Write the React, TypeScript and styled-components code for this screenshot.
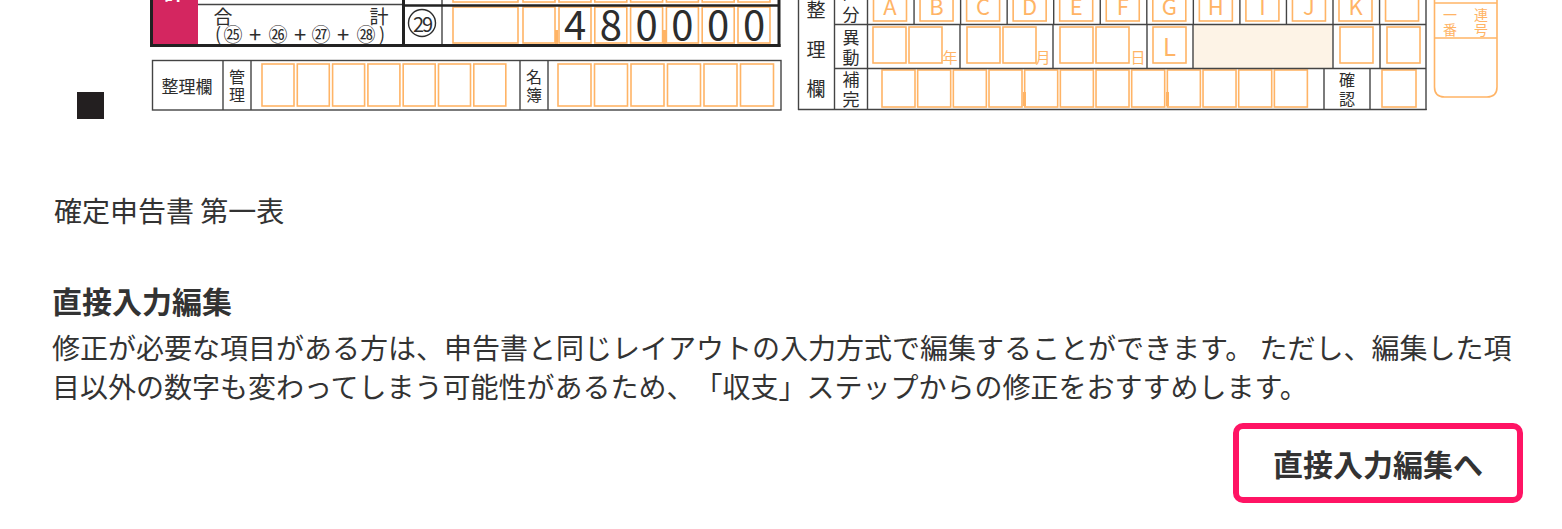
import React from "react";
import styled, { createGlobalStyle } from "styled-components";

const ORANGE = "#ffb466";
const INK = "#2d2d2d";
const LINE = "#444";
const FONT = `"Noto Sans CJK JP", "Noto Sans", sans-serif`;

const GlobalStyle = createGlobalStyle`
	body {
		margin: 0;
		background: #fff;
		color: #333;
		font-family: ${FONT};
	}
`;

const Page = styled.div`
	width: 1562px;
`;

const FormPreview = styled.svg`
	display: block;
	width: 1562px;
	height: 130px;
`;

const OrangeBox = styled.rect`
	fill: none;
	stroke: ${ORANGE};
	stroke-width: 1.6;
`;

const Tick = styled.rect`
	fill: ${ORANGE};
`;

const Rule = styled.line<{ $w?: number; $c?: string }>`
	stroke: ${({ $c }) => $c ?? LINE};
	stroke-width: ${({ $w }) => $w ?? 1.4};
`;

const FormText = styled.text<{ $size: number; $color?: string; $bold?: boolean }>`
	font-family: ${FONT};
	font-size: ${({ $size }) => $size}px;
	font-weight: ${({ $bold }) => ($bold ? 700 : 400)};
	fill: ${({ $color }) => $color ?? INK};
	text-anchor: middle;
	dominant-baseline: central;
`;

const Content = styled.div`
	padding: 0 39px 0 52px;
`;

const FormTitle = styled.p`
	margin: 61px 0 0 2px;
	font-size: 28px;
	line-height: 1.4;
	color: #333;
`;

const SectionHeading = styled.h2`
	margin: 49px 0 0;
	font-size: 30px;
	font-weight: 700;
	line-height: 1.4;
	color: #333;
`;

const Description = styled.p`
	margin: 7px 0 0;
	font-size: 28px;
	line-height: 1.4;
	color: #333;
	text-spacing-trim: space-all;
`;

const Actions = styled.div`
	display: flex;
	justify-content: flex-end;
	margin-top: 16px;
`;

const EditButton = styled.button`
	width: 290px;
	height: 80px;
	border: 6px solid #ff1464;
	border-radius: 10px;
	background: #fff;
	color: #333;
	font-family: ${FONT};
	font-size: 30px;
	font-weight: 700;
	cursor: pointer;
`;

const Box = ({ x, y, w, h }: { x: number; y: number; w: number; h: number }) => (
	<OrangeBox x={x} y={y} width={w} height={h} />
);

const VText = ({ x, y1, y2, a, b, size = 16 }: { x: number; y1: number; y2: number; a: string; b: string; size?: number }) => (
	<>
		<FormText x={x} y={y1} $size={size}>{a}</FormText>
		<FormText x={x} y={y2} $size={size}>{b}</FormText>
	</>
);

const digits = ["4", "8", "0", "0", "0", "0"];
const letters = ["A", "B", "C", "D", "E", "F", "G", "H", "I", "J", "K", ""];

// pieces of "(㉕ + ㉖ + ㉗ + ㉘)" with their centres and sizes
const sumFormula: [string, number, number][] = [
	["(", 218, 18],
	["㉕", 233, 19],
	["+", 255, 22],
	["㉖", 278, 19],
	["+", 300, 22],
	["㉗", 321, 19],
	["+", 343, 22],
	["㉘", 366, 19],
	[")", 382, 18],
];

const TotalSection = () => {
	const digitX = (i: number) => 559 + i * 35.8;
	return (
		<g>
			<rect x={150} y={-10} width={48} height={56} fill="#d42660" />
			<FormText x={174} y={-9} $size={20} $bold $color="#fff">計</FormText>
			<Rule x1={198} y1={4.5} x2={403} y2={4.5} />
			<FormText x={223} y={15} $size={19}>合</FormText>
			<FormText x={379} y={15} $size={19}>計</FormText>
			{sumFormula.map(([t, x, s], i) => (
				<FormText key={`f${i}`} x={x} y={33} $size={s}>{t}</FormText>
			))}

			{/* upper row, mostly scrolled off */}
			<Box x={453} y={-30} w={65} h={32} />
			<Box x={523} y={-30} w={32} h={32} />
			{digits.map((_, i) => (
				<Box key={`u${i}`} x={digitX(i)} y={-30} w={32} h={32} />
			))}

			<circle cx={422} cy={23} r={13.5} fill="none" stroke={INK} strokeWidth={1.4} />
			<FormText x={422} y={23} $size={20} letterSpacing={-2}>29</FormText>
			<Rule x1={442} y1={-10} x2={442} y2={45} />
			<Box x={453} y={7} w={65} h={36} />
			<Box x={523} y={7} w={32} h={36} />
			{digits.map((d, i) => (
				<g key={`d${i}`}>
					<Box x={digitX(i)} y={7} w={32} h={36} />
					<FormText x={digitX(i) + 16} y={23} $size={40}>{d}</FormText>
				</g>
			))}
			<Tick x={555} y={30} width={3} height={14} />
			<Tick x={663} y={30} width={3} height={14} />

			<Rule x1={403} y1={5.5} x2={780} y2={5.5} $w={2.4} $c="#222" />
			<Rule x1={151.5} y1={-10} x2={151.5} y2={47} $w={3} $c="#222" />
			<Rule x1={403.5} y1={-10} x2={403.5} y2={47} $w={3} $c="#222" />
			<Rule x1={779} y1={-10} x2={779} y2={47} $w={3} $c="#222" />
			<Rule x1={150} y1={45.5} x2={780.5} y2={45.5} $w={3} $c="#222" />
		</g>
	);
};

const FilingSection = () => (
	<g>
		<rect x={77} y={92} width={27} height={27} fill="#231f20" />
		<rect x={152.5} y={60.5} width={628.5} height={49.5} fill="none" stroke={LINE} strokeWidth={1.4} />
		<Rule x1={223} y1={60} x2={223} y2={110} />
		<Rule x1={251} y1={60} x2={251} y2={110} />
		<Rule x1={520} y1={60} x2={520} y2={110} />
		<Rule x1={548} y1={60} x2={548} y2={110} />
		<FormText x={187} y={85} $size={17}>整理欄</FormText>
		<VText x={237} y1={76} y2={94} a="管" b="理" size={16} />
		<VText x={534} y1={76} y2={94} a="名" b="簿" size={16} />
		{Array.from({ length: 7 }, (_, i) => (
			<Box key={`k${i}`} x={262 + i * 35.3} y={64} w={32} h={42} />
		))}
		{Array.from({ length: 6 }, (_, i) => (
			<Box key={`m${i}`} x={558 + i * 36.5} y={64} w={33} h={42} />
		))}
	</g>
);

const OfficeSection = () => {
	const cellX = (i: number) => 867.5 + i * 46.55;
	const row2Boxes = [873, 909, 967, 1003, 1060, 1096, 1153, 1340, 1387];
	return (
		<g>
			<rect x={1193} y={24.5} width={140} height={44} fill="#fdf3e6" />

			{/* row 1: 区分 */}
			{letters.map((l, i) => (
				<g key={`l${i}`}>
					<Box x={cellX(i) + 6} y={-16} w={33} h={37} />
					{l && (
						<FormText x={cellX(i) + 22.5} y={5} $size={22} $color={ORANGE}>{l}</FormText>
					)}
					{i > 0 && <Rule x1={cellX(i)} y1={-10} x2={cellX(i)} y2={24.5} />}
				</g>
			))}

			{/* row 2: 異動 */}
			{row2Boxes.map((x) => (
				<Box key={`r${x}`} x={x} y={27} w={33} h={36} />
			))}
			<FormText x={950} y={56} $size={15} $color={ORANGE}>年</FormText>
			<FormText x={1043} y={56} $size={15} $color={ORANGE}>月</FormText>
			<FormText x={1138} y={56} $size={15} $color={ORANGE}>日</FormText>
			<FormText x={1169.5} y={45} $size={24} $color={ORANGE}>L</FormText>
			{[960, 1053, 1147, 1193, 1333, 1380].map((x) => (
				<Rule key={`v${x}`} x1={x} y1={24.5} x2={x} y2={68.5} />
			))}

			{/* row 3: 補完 */}
			{Array.from({ length: 12 }, (_, i) => (
				<Box key={`h${i}`} x={882 + i * 35.67} y={70} w={33} h={37} />
			))}
			<Tick x={1023} y={92} width={3} height={14} />
			<Tick x={1166} y={92} width={3} height={14} />
			<Rule x1={1324} y1={68.5} x2={1324} y2={109.5} />
			<Rule x1={1370} y1={68.5} x2={1370} y2={109.5} />
			<VText x={1347} y1={79} y2={98} a="確" b="認" size={16} />
			<Box x={1382} y={70} w={34} h={37} />

			{/* frame */}
			<Rule x1={798.5} y1={-10} x2={798.5} y2={110} />
			<Rule x1={834.5} y1={-10} x2={834.5} y2={110} />
			<Rule x1={867.5} y1={-10} x2={867.5} y2={110} />
			<Rule x1={1426} y1={-10} x2={1426} y2={110} />
			<Rule x1={834.5} y1={24.5} x2={1426} y2={24.5} />
			<Rule x1={834.5} y1={68.5} x2={1426} y2={68.5} />
			<Rule x1={798} y1={109.5} x2={1426.7} y2={109.5} />

			<FormText x={816} y={8} $size={19}>整</FormText>
			<FormText x={816} y={48} $size={19}>理</FormText>
			<FormText x={816} y={87} $size={19}>欄</FormText>
			<VText x={851} y1={-9} y2={13} a="区" b="分" size={17} />
			<VText x={851} y1={36} y2={56} a="異" b="動" size={17} />
			<VText x={851} y1={78} y2={98} a="補" b="完" size={17} />

			{/* 一連番号 tab */}
			<path
				d="M1434.5 -20 V87 Q1434.5 97 1444.5 97 H1487 Q1497 97 1497 87 V-20"
				fill="none"
				stroke={ORANGE}
				strokeWidth={1.6}
			/>
			<Rule x1={1434.5} y1={3} x2={1497} y2={3} $c={ORANGE} $w={1.6} />
			<Rule x1={1434.5} y1={38} x2={1497} y2={38} $c={ORANGE} $w={1.6} />
			<FormText x={1450} y={14} $size={14} $color={ORANGE}>一</FormText>
			<FormText x={1481} y={14} $size={14} $color={ORANGE}>連</FormText>
			<FormText x={1450} y={29} $size={14} $color={ORANGE}>番</FormText>
			<FormText x={1481} y={29} $size={14} $color={ORANGE}>号</FormText>
		</g>
	);
};

const App = () => (
	<Page>
		<GlobalStyle />
		<FormPreview viewBox="0 0 1562 130">
			<TotalSection />
			<FilingSection />
			<OfficeSection />
		</FormPreview>
		<Content>
			<FormTitle>確定申告書 第一表</FormTitle>
			<SectionHeading>直接入力編集</SectionHeading>
			<Description>
				修正が必要な項目がある方は、申告書と同じレイアウトの入力方式で編集することができます。
				ただし、編集した項目以外の数字も変わってしまう可能性があるため、「収支」ステップからの修正をおすすめします。
			</Description>
			<Actions>
				<EditButton type="button">直接入力編集へ</EditButton>
			</Actions>
		</Content>
	</Page>
);

export default App;
